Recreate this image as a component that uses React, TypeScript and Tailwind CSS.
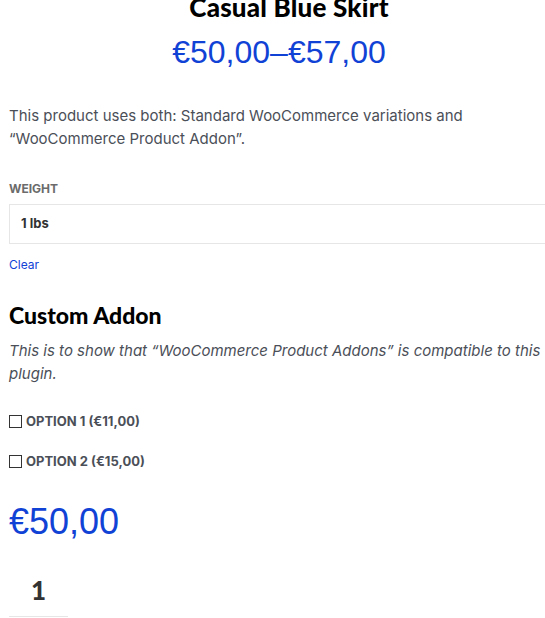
import React from 'react';

const body = { fontFamily: 'Inter, "Open Sans", sans-serif' };
const heading = { fontFamily: 'Lato, "Liberation Sans", sans-serif' };
const price = { fontFamily: '"Liberation Sans", Arial, sans-serif' };

export default function App() {
  return (
    <div className="w-[545px] h-[618px] overflow-hidden bg-white">
      <div className="w-[560px] ml-[9px]" style={body}>
        <h1 className="text-center text-[26px] leading-[26px] font-black text-black mt-[-6px] tracking-[0.2px]" style={heading}>
          Casual Blue Skirt
        </h1>
        <p className="text-center text-[32px] leading-[36px] text-[#1142d6] mt-[14px] pr-[20px]" style={price}>
          €50,00–€57,00
        </p>

        <p className="mt-[34px] text-[15px] leading-[23px] text-[#4b4f58] w-[470px]">
          This product uses both: Standard WooCommerce variations and “WooCommerce Product Addon”.
        </p>

        <div className="mt-[31px]">
          <label className="block text-[12px] leading-[16px] font-bold uppercase text-[#6b6b6b]">Weight</label>
          <div className="mt-[7px] h-[40px] border border-[#e6e6e6] flex items-center pl-[11px]">
            <span className="text-[13px] font-bold text-[#333]">1 lbs</span>
          </div>
          <a className="block mt-[13px] text-[12px] leading-[16px] text-[#1142d6]">Clear</a>
        </div>

        <h2 className="mt-[28px] text-[23px] leading-[28px] font-black text-black" style={heading}>
          Custom Addon
        </h2>
        <p className="mt-[10px] text-[15px] leading-[23px] italic text-[#4b4f58]">
          This is to show that “WooCommerce Product Addons” is compatible to this plugin.
        </p>

        <div className="mt-[28px] flex flex-col gap-[23px]">
          {['OPTION 1 (€11,00)', 'OPTION 2 (€15,00)'].map(o => (
            <label key={o} className="flex items-center gap-[4px] text-[13px] leading-[17px] font-bold text-[#4b4f58]">
              <span className="w-[13px] h-[13px] border border-[#333] bg-white inline-block" />
              {o}
            </label>
          ))}
        </div>

        <p className="mt-[32px] text-[36px] leading-[40px] text-[#1142d6]" style={price}>€50,00</p>

        <div className="mt-[21px] w-[59px] h-[54px] border-b border-[#e6e6e6] flex items-center justify-center">
          <span className="text-[26px] leading-[30px] font-black text-[#333]" style={heading}>1</span>
        </div>
      </div>
    </div>
  );
}
